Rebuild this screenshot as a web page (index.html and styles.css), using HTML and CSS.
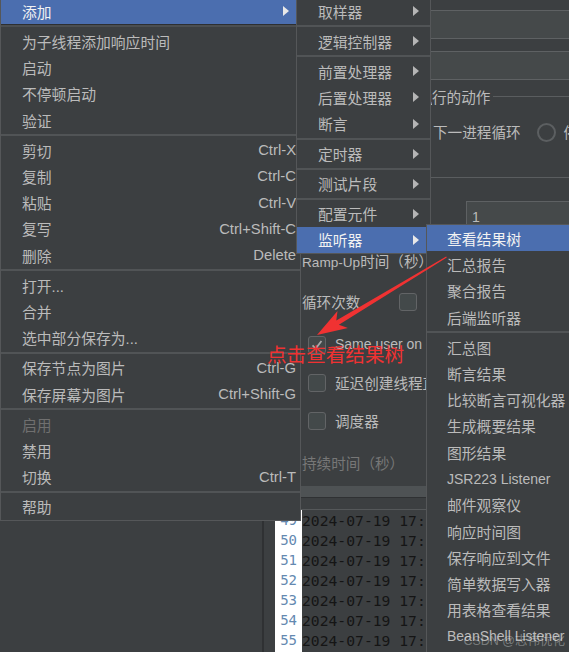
FILE: index.html
```html
<!DOCTYPE html>
<html lang="zh-CN">
<head>
<meta charset="utf-8">
<title>JMeter</title>
<link rel="stylesheet" href="styles.css">
</head>
<body>
<div class="app">
  <div class="tree"></div>
  <div class="divider"></div>
  <div class="panel">
    <div class="form">
      <div class="frow f1"><span class="flabel">名称：</span><div class="field"></div></div>
      <div class="frow f2"><span class="flabel">注释：</span><div class="field"></div></div>
      <div class="titled">
        <div class="title-row"><span class="title-pre">在取样器错误后要执</span><span class="title-text">行的动作</span><span class="tline"></span></div>
        <div class="radio-row">
          <span class="rgroup"><span class="radio"></span><span class="rtext">继续</span><span class="radio"></span><span class="rtext pre">启动</span></span><span class="rtext next">下一进程循环</span>
          <span class="radio r3"></span><span class="rtext">停止线程</span>
        </div>
      </div>
      <div class="hline"></div>
      <div class="frow f3"><span class="flabel">线程数：</span><div class="field small">1</div></div>
      <div class="frow f4"><span class="flabel"><span class="lat">Ramp-Up</span>时间（秒）：</span><div class="field small"></div></div>
      <div class="frow f5"><span class="flabel w97">循环次数</span><span class="cb"></span><span class="cbtext">永远</span></div>
      <div class="frow f6"><span class="cb checked"><svg viewBox="0 0 18 18" width="16" height="16"><path d="M4 9.5 L7.5 13 L14 4.5" fill="none" stroke="#a7a7a7" stroke-width="2"/></svg></span><span class="cbtext latw">Same user on each iteration</span></div>
      <div class="frow f7"><span class="cb"></span><span class="cbtext">延迟创建线程直到需要</span></div>
      <div class="frow f8"><span class="cb"></span><span class="cbtext">调度器</span></div>
      <div class="frow f9"><span class="flabel disabled">持续时间（秒）</span></div>
    </div>
    <div class="band"></div>
    <div class="logtop"></div>
    <div class="log">
      <div class="lrow"><span class="ln">49</span><span class="lt">2024-07-19 17:36:58,372 INFO o.a.j.e.StandardJMeterEngine</span></div>
      <div class="lrow"><span class="ln">50</span><span class="lt">2024-07-19 17:36:58,373 INFO o.a.j.e.StandardJMeterEngine</span></div>
      <div class="lrow"><span class="ln">51</span><span class="lt">2024-07-19 17:36:58,374 INFO o.a.j.t.JMeterThread</span></div>
      <div class="lrow"><span class="ln">52</span><span class="lt">2024-07-19 17:36:58,374 INFO o.a.j.t.JMeterThread</span></div>
      <div class="lrow"><span class="ln">53</span><span class="lt">2024-07-19 17:36:58,375 INFO o.a.j.t.ThreadGroup</span></div>
      <div class="lrow"><span class="ln">54</span><span class="lt">2024-07-19 17:36:58,376 INFO o.a.j.t.JMeterThread</span></div>
      <div class="lrow"><span class="ln">55</span><span class="lt">2024-07-19 17:36:58,377 INFO o.a.j.e.StandardJMeterEngine</span></div>
      <div class="lrow"><span class="ln">56</span><span class="lt">2024-07-19 17:36:58,378 INFO o.a.j.e.StandardJMeterEngine</span></div>
    </div>
  </div>
</div>

<div class="menu main-menu">
  <div class="mi hl">添加<span class="arrow"></span></div>
  <div class="sep first"></div>
  <div class="mi">为子线程添加响应时间</div>
  <div class="mi">启动</div>
  <div class="mi">不停顿启动</div>
  <div class="mi">验证</div>
  <div class="sep"></div>
  <div class="mi">剪切<span class="sc">Ctrl-X</span></div>
  <div class="mi">复制<span class="sc">Ctrl-C</span></div>
  <div class="mi">粘贴<span class="sc">Ctrl-V</span></div>
  <div class="mi">复写<span class="sc">Ctrl+Shift-C</span></div>
  <div class="mi">删除<span class="sc">Delete</span></div>
  <div class="sep"></div>
  <div class="mi">打开...</div>
  <div class="mi">合并</div>
  <div class="mi">选中部分保存为...</div>
  <div class="sep"></div>
  <div class="mi">保存节点为图片<span class="sc">Ctrl-G</span></div>
  <div class="mi">保存屏幕为图片<span class="sc">Ctrl+Shift-G</span></div>
  <div class="sep"></div>
  <div class="mi disabled">启用</div>
  <div class="mi">禁用</div>
  <div class="mi">切换<span class="sc">Ctrl-T</span></div>
  <div class="sep"></div>
  <div class="mi">帮助</div>
</div>

<div class="menu sub-add">
  <div class="mi">取样器<span class="arrow"></span></div>
  <div class="sep"></div>
  <div class="mi">逻辑控制器<span class="arrow"></span></div>
  <div class="sep"></div>
  <div class="mi">前置处理器<span class="arrow"></span></div>
  <div class="mi">后置处理器<span class="arrow"></span></div>
  <div class="mi">断言<span class="arrow"></span></div>
  <div class="sep"></div>
  <div class="mi">定时器<span class="arrow"></span></div>
  <div class="sep"></div>
  <div class="mi">测试片段<span class="arrow"></span></div>
  <div class="sep"></div>
  <div class="mi">配置元件<span class="arrow"></span></div>
  <div class="mi hl">监听器<span class="arrow"></span></div>
</div>

<div class="menu sub-listen">
  <div class="mi hl">查看结果树</div>
  <div class="mi">汇总报告</div>
  <div class="mi">聚合报告</div>
  <div class="mi">后端监听器</div>
  <div class="sep"></div>
  <div class="mi">汇总图</div>
  <div class="mi">断言结果</div>
  <div class="mi">比较断言可视化器</div>
  <div class="mi">生成概要结果</div>
  <div class="mi">图形结果</div>
  <div class="mi lat">JSR223 Listener</div>
  <div class="mi">邮件观察仪</div>
  <div class="mi">响应时间图</div>
  <div class="mi">保存响应到文件</div>
  <div class="mi">简单数据写入器</div>
  <div class="mi">用表格查看结果</div>
  <div class="mi lat">BeanShell Listener</div>
  <div class="mi">Backend Listener</div>
</div>

<svg class="annot" width="569" height="652" viewBox="0 0 569 652">
  <polygon points="446.8,257.6 338.9,324.7 347.9,328.1 317,335 337.5,310.9 336.3,320.5 446.2,256.4" fill="#f03232"/>
</svg>
<div class="annot-text">点击查看结果树</div>
<div class="watermark">CSDN @志伟优化</div>
</body>
</html>
```

FILE: styles.css
```css
* { box-sizing: border-box; }
html, body { margin: 0; padding: 0; }
body {
  width: 569px;
  height: 652px;
  overflow: hidden;
  position: relative;
  background: #3c3f41;
  color: #bbbbbb;
  font-family: "Liberation Sans", "Noto Sans CJK SC", sans-serif;
}

/* ---------- application behind the menus ---------- */
.app {
  display: grid;
  grid-template-columns: 262px 2px 1fr;
  height: 652px;
}
.tree { background: #3c3f41; }
.divider { background: #2f3133; }
.panel {
  display: flex;
  flex-direction: column;
  padding-left: 11px;
  overflow: hidden;
  min-width: 0;
}
.form {
  width: 330px;
  flex: none;
  padding-left: 27px;
  padding-top: 10px;
  font-size: 14.6px;
  display: flex;
  flex-direction: column;
}
.lat { font-size: 13.6px; }
.latw { font-size: 14px; }
.frow {
  display: flex;
  align-items: center;
  height: 29px;
  flex: none;
}
.flabel { flex: none; width: 128px; white-space: nowrap; }
.flabel.w97 { width: 97px; }
.f2 { margin-top: 12px; }
.field {
  flex: 1;
  height: 29px;
  background: #45494a;
  border-top: 1px solid #5e6163;
  border-bottom: 1px solid #5e6163;
  border-left: 1px solid #5e6163;
}
.field.small {
  margin-left: 36px;
  height: 30px;
  padding-left: 5px;
  line-height: 30px;
  font-size: 14px;
  color: #bbbbbb;
}
.titled { display: flex; flex-direction: column; }
.title-row {
  display: flex;
  align-items: center;
  height: 20px;
  margin-top: 6px;
  white-space: nowrap;
}
.title-pre { width: 130px; overflow: hidden; flex: none; }
.tline { flex: 1; height: 1px; background: #5a5d5f; margin-left: 3px; margin-top: 1px; }
.radio-row {
  display: flex;
  align-items: center;
  height: 20px;
  margin-top: 16px;
  white-space: nowrap;
}
.rgroup {
  flex: none;
  width: 129px;
  display: flex;
  align-items: center;
  justify-content: flex-end;
  overflow: hidden;
}
.radio {
  flex: none;
  width: 19px;
  height: 19px;
  border-radius: 50%;
  border: 2px solid #5c5f61;
  background: #3c3f41;
  margin-right: 6px;
}
.rtext { margin-right: 16px; position: relative; top: -1px; flex: none; }
.rtext.pre { margin-right: -2px; }
.rtext.next { margin-left: 2px; }
.radio.r3 { margin-right: 8px; }
.hline { height: 1px; background: #5a5d5f; margin-top: 35px; flex: none; }
.f3 { margin-top: 23px; height: 30px; }
.f4 { margin-top: 14px; height: 30px; }
.f5 { margin-top: 11px; height: 30px; }
.f6 { margin-top: 13px; height: 30px; margin-left: 6px; }
.f7 { margin-top: 8px; height: 30px; margin-left: 6px; }
.f8 { margin-top: 8px; height: 30px; margin-left: 6px; }
.f9 { margin-top: 12px; height: 30px; }
.cb {
  flex: none;
  width: 18px;
  height: 18px;
  border: 1px solid #626466;
  border-radius: 3px;
  background: #43494a;
  display: flex;
  align-items: center;
  justify-content: center;
  margin-top: 2px;
}
.cbtext { margin-left: 9px; white-space: nowrap; }
.disabled { color: #777777; }

.band {
  flex: none;
  height: 11px;
  margin-top: 9px;
  background: #4e5254;
}
.logtop {
  flex: none;
  height: 13px;
  border-top: 1px solid #2f3133;
  border-bottom: 1px solid #55585a;
}
.log {
  display: flex;
  flex-direction: column;
  font-family: "DejaVu Sans Mono", monospace;
  font-size: 14.7px;
}
.lrow { display: flex; height: 20px; align-items: center; white-space: nowrap; flex: none; }
.ln {
  flex: none;
  width: 27px;
  height: 20px;
  line-height: 20px;
  background: #ffffff;
  color: #6388b0;
  text-align: right;
  padding-right: 5px;
  font-size: 14px;
}
.lt { color: #151515; padding-left: 0; }

/* ---------- popup menus ---------- */
.menu {
  position: absolute;
  background: #3c3f41;
  border: 1px solid #555759;
  font-size: 14.8px;
  display: flex;
  flex-direction: column;
}
.mi {
  height: 26.3px;
  flex: none;
  display: flex;
  align-items: center;
  padding-left: 21px;
  padding-right: 4px;
  white-space: nowrap;
  color: #bbbbbb;
}
.mi.hl { background: #4b6eaf; color: #f2f2f2; }
.mi.disabled { color: #707070; }
.sc { margin-left: auto; }
.sep {
  flex: none;
  height: 2px;
  margin: 0.85px 0;
  background: #515456;
}
.arrow {
  margin-left: auto;
  width: 0;
  height: 0;
  border-left: 6px solid #b5b5b5;
  border-top: 5px solid transparent;
  border-bottom: 5px solid transparent;
}
.hl .arrow { border-left-color: #e8e8e8; }

.main-menu {
  left: 0;
  top: -2px;
  width: 301px;
  border-top: none;
  z-index: 1;
}
.main-menu .arrow { margin-right: 7px; }
.main-menu .sep.first { background: #4b4e50; border-top: 1px solid #2d2f31; height: 3px; margin: 0 0 0.7px; }

.sub-add {
  left: 296px;
  top: -2px;
  width: 135px;
  border-top: none;
  z-index: 2;
}
.sub-add .mi { padding-right: 11px; }

.sub-listen {
  left: 426px;
  top: 224px;
  width: 200px;
  z-index: 3;
}
.sub-listen .mi { padding-left: 20px; }
.sub-listen .mi.lat { font-size: 14px; }

/* ---------- annotation overlay ---------- */
.annot {
  position: absolute;
  left: 0;
  top: 0;
  z-index: 4;
}
.annot-text {
  position: absolute;
  left: 267px;
  top: 344px;
  font-size: 19.6px;
  line-height: 1;
  color: #f03232;
  font-family: "Noto Sans CJK SC", sans-serif;
  z-index: 4;
  white-space: nowrap;
}
.watermark {
  position: absolute;
  right: 4px;
  bottom: 3px;
  font-size: 12.5px;
  color: rgba(255, 255, 255, 0.32);
  z-index: 4;
  white-space: nowrap;
}
```
